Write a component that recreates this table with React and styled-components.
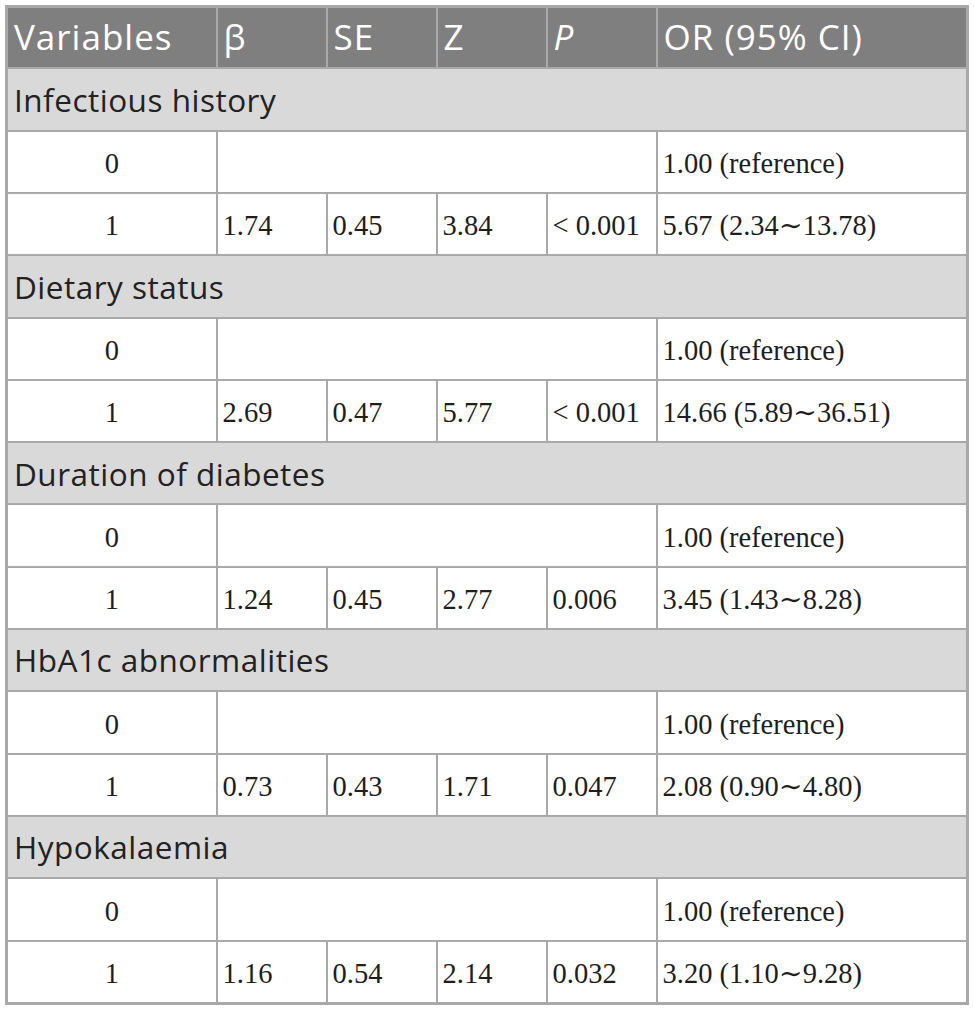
import styled, { createGlobalStyle } from 'styled-components';

const Global = createGlobalStyle`
  html, body {
    margin: 0;
    padding: 0;
    background: #ffffff;
  }
  body {
    padding: 5px 5px;
  }
`;

const Table = styled.table`
  width: 964px;
  border-collapse: collapse;
  border: 3px solid #a9a9a9;
  table-layout: fixed;
`;

const HeadCell = styled.th`
  background: #7f7f7f;
  color: #ffffff;
  font-family: 'Open Sans', Lato, sans-serif;
  font-weight: 400;
  font-size: 35px;
  letter-spacing: 1px;
  line-height: 1;
  text-align: left;
  padding: 0 6px 3px;
  height: 56.4px;
  border: 2px solid #a9a9a9;
  font-style: ${(p) => (p.$italic ? 'italic' : 'normal')};
`;

const SectionCell = styled.td`
  background: #d9d9d9;
  color: #222222;
  font-family: 'Open Sans', Lato, sans-serif;
  font-size: 31.5px;
  letter-spacing: 0.5px;
  line-height: 1;
  padding: 0 6px;
  height: 60.3px;
  border: 2px solid #a9a9a9;
`;

const Cell = styled.td`
  background: #ffffff;
  color: #1e1e1e;
  font-family: 'Liberation Serif', 'DejaVu Serif', serif;
  font-size: 28.5px;
  line-height: 1.1;
  padding: 4px 5px 0;
  height: 56.3px;
  border: 2px solid #a9a9a9;
  text-align: ${(p) => (p.$center ? 'center' : 'left')};
  white-space: nowrap;
`;

const sections = [
  { name: 'Infectious history', vals: ['1.74', '0.45', '3.84', '< 0.001', '5.67 (2.34∼13.78)'] },
  { name: 'Dietary status', vals: ['2.69', '0.47', '5.77', '< 0.001', '14.66 (5.89∼36.51)'] },
  { name: 'Duration of diabetes', vals: ['1.24', '0.45', '2.77', '0.006', '3.45 (1.43∼8.28)'] },
  { name: 'HbA1c abnormalities', vals: ['0.73', '0.43', '1.71', '0.047', '2.08 (0.90∼4.80)'] },
  { name: 'Hypokalaemia', vals: ['1.16', '0.54', '2.14', '0.032', '3.20 (1.10∼9.28)'] },
];

export default function App() {
  return (
    <>
      <Global />
      <Table>
        <colgroup>
          <col style={{ width: 210 }} />
          <col style={{ width: 110 }} />
          <col style={{ width: 110 }} />
          <col style={{ width: 110 }} />
          <col style={{ width: 110 }} />
          <col />
        </colgroup>
        <thead>
          <tr>
            <HeadCell>Variables</HeadCell>
            <HeadCell>β</HeadCell>
            <HeadCell>SE</HeadCell>
            <HeadCell>Z</HeadCell>
            <HeadCell $italic>P</HeadCell>
            <HeadCell>OR (95% CI)</HeadCell>
          </tr>
        </thead>
        <tbody>
          {sections.map((s) => (
            <Section key={s.name} s={s} />
          ))}
        </tbody>
      </Table>
    </>
  );
}

function Section({ s }) {
  return (
    <>
      <tr>
        <SectionCell colSpan={6}>{s.name}</SectionCell>
      </tr>
      <tr>
        <Cell $center>0</Cell>
        <Cell colSpan={4} />
        <Cell>1.00 (reference)</Cell>
      </tr>
      <tr>
        <Cell $center>1</Cell>
        {s.vals.map((v, i) => (
          <Cell key={i}>{v}</Cell>
        ))}
      </tr>
    </>
  );
}
